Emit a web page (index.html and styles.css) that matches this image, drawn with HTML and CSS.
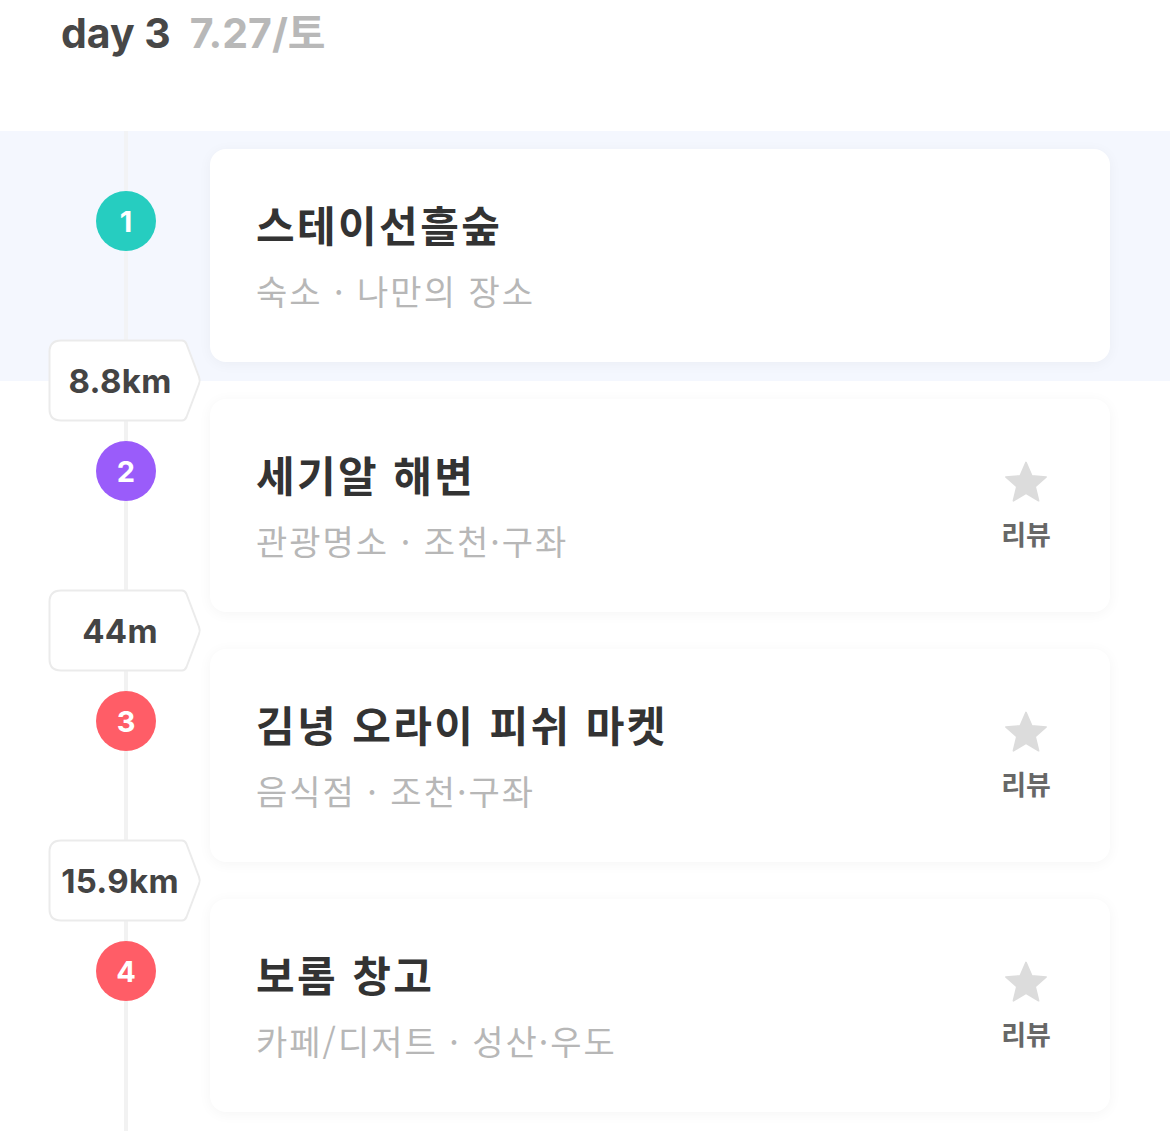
FILE: index.html
```html
<!DOCTYPE html>
<html lang="ko">
<head>
    <meta charset="UTF-8">
    <meta name="viewport" content="width=device-width, initial-scale=1.0">
    <title>day 3</title>
    <link rel="stylesheet" href="styles.css">
</head>
<body>
    <header class="day-header">
        <span class="day-title">day 3</span>
        <span class="day-date">7.27/토</span>
    </header>

    <div class="route">
        <div class="stop active">
            <div class="rail">
                <span class="pin pin-teal">1</span>
            </div>
            <div class="card">
                <div class="card-body">
                    <div class="place-name">스테이선흘숲</div>
                    <div class="place-meta">숙소 · 나만의 장소</div>
                </div>
            </div>
            <div class="distance">
                <svg class="distance-shape" width="154" height="83" viewBox="0 0 154 83">
                    <path d="M13 1.5 H134 Q137 1.5 138.5 5 L151 38 Q152.5 41.5 151 45 L138.5 78 Q137 81.5 134 81.5 H13 Q1.5 81.5 1.5 70 V13 Q1.5 1.5 13 1.5 Z" fill="#fff" stroke="#ebebeb" stroke-width="2"/>
                </svg>
                <span class="distance-text">8.8km</span>
            </div>
        </div>

        <div class="stop">
            <div class="rail">
                <span class="pin pin-purple">2</span>
            </div>
            <div class="card">
                <div class="card-body">
                    <div class="place-name">세기알 해변</div>
                    <div class="place-meta">관광명소 · 조천·구좌</div>
                </div>
                <div class="review">
                    <svg class="star" width="48" height="46" viewBox="0 0 24 23">
                        <path d="M12 1.2 L14.9 7.9 L22.1 8.5 L16.6 13.3 L18.3 20.4 L12 16.6 L5.7 20.4 L7.4 13.3 L1.9 8.5 L9.1 7.9 Z" fill="#dcdcdc" stroke="#dcdcdc" stroke-width="0.8" stroke-linejoin="round"/>
                    </svg>
                    <span class="review-label">리뷰</span>
                </div>
            </div>
            <div class="distance">
                <svg class="distance-shape" width="154" height="83" viewBox="0 0 154 83">
                    <path d="M13 1.5 H134 Q137 1.5 138.5 5 L151 38 Q152.5 41.5 151 45 L138.5 78 Q137 81.5 134 81.5 H13 Q1.5 81.5 1.5 70 V13 Q1.5 1.5 13 1.5 Z" fill="#fff" stroke="#ebebeb" stroke-width="2"/>
                </svg>
                <span class="distance-text">44m</span>
            </div>
        </div>

        <div class="stop">
            <div class="rail">
                <span class="pin pin-red">3</span>
            </div>
            <div class="card">
                <div class="card-body">
                    <div class="place-name">김녕 오라이 피쉬 마켓</div>
                    <div class="place-meta">음식점 · 조천·구좌</div>
                </div>
                <div class="review">
                    <svg class="star" width="48" height="46" viewBox="0 0 24 23">
                        <path d="M12 1.2 L14.9 7.9 L22.1 8.5 L16.6 13.3 L18.3 20.4 L12 16.6 L5.7 20.4 L7.4 13.3 L1.9 8.5 L9.1 7.9 Z" fill="#dcdcdc" stroke="#dcdcdc" stroke-width="0.8" stroke-linejoin="round"/>
                    </svg>
                    <span class="review-label">리뷰</span>
                </div>
            </div>
            <div class="distance">
                <svg class="distance-shape" width="154" height="83" viewBox="0 0 154 83">
                    <path d="M13 1.5 H134 Q137 1.5 138.5 5 L151 38 Q152.5 41.5 151 45 L138.5 78 Q137 81.5 134 81.5 H13 Q1.5 81.5 1.5 70 V13 Q1.5 1.5 13 1.5 Z" fill="#fff" stroke="#ebebeb" stroke-width="2"/>
                </svg>
                <span class="distance-text">15.9km</span>
            </div>
        </div>

        <div class="stop">
            <div class="rail">
                <span class="pin pin-red">4</span>
            </div>
            <div class="card">
                <div class="card-body">
                    <div class="place-name">보롬 창고</div>
                    <div class="place-meta">카페/디저트 · 성산·우도</div>
                </div>
                <div class="review">
                    <svg class="star" width="48" height="46" viewBox="0 0 24 23">
                        <path d="M12 1.2 L14.9 7.9 L22.1 8.5 L16.6 13.3 L18.3 20.4 L12 16.6 L5.7 20.4 L7.4 13.3 L1.9 8.5 L9.1 7.9 Z" fill="#dcdcdc" stroke="#dcdcdc" stroke-width="0.8" stroke-linejoin="round"/>
                    </svg>
                    <span class="review-label">리뷰</span>
                </div>
            </div>
        </div>
    </div>
</body>
</html>
```

FILE: styles.css
```css
body {
    margin: 0;
    padding: 0;
    background-color: #ffffff;
    font-family: Inter, "Noto Sans CJK KR", sans-serif;
    color: #333333;
}

.day-header {
    height: 131px;
    box-sizing: border-box;
    padding: 8px 0 0 61px;
    display: flex;
    align-items: flex-start;
    gap: 19px;
    font-weight: 700;
    font-size: 41px;
    line-height: 50px;
}

.day-title {
    color: #474747;
}

.day-date {
    color: #b8b8b8;
}

.route {
    display: flex;
    flex-direction: column;
}

.stop {
    position: relative;
    height: 250px;
    display: flex;
    background: linear-gradient(to right, transparent 124px, #f2f2f2 124px, #f2f2f2 128px, transparent 128px);
}

.stop.active {
    background: linear-gradient(to right, transparent 124px, #f2f3f5 124px, #f2f3f5 128px, transparent 128px), #f4f7fe;
}

.rail {
    width: 210px;
    flex-shrink: 0;
    padding: 60px 0 0 96px;
    box-sizing: border-box;
}

.pin {
    display: flex;
    align-items: center;
    justify-content: center;
    width: 60px;
    height: 60px;
    border-radius: 50%;
    color: #ffffff;
    font-family: Inter, sans-serif;
    font-weight: 700;
    font-size: 29px;
}

.pin-teal {
    background-color: #26cdc0;
}

.pin-purple {
    background-color: #9a5cfa;
}

.pin-red {
    background-color: #ff5d67;
}

.card {
    width: 900px;
    height: 213px;
    margin-top: 18px;
    box-sizing: border-box;
    padding: 0 38px 0 46px;
    display: flex;
    background-color: #ffffff;
    border-radius: 16px;
    box-shadow: 0 2px 14px rgba(0, 0, 0, 0.045);
}

.card-body {
    flex: 1;
    padding-top: 46px;
}

.place-name {
    font-family: "Noto Sans CJK KR", sans-serif;
    font-weight: 700;
    font-size: 42px;
    line-height: 58px;
    color: #333333;
    letter-spacing: 2.4px;
}

.place-meta {
    margin-top: 15px;
    font-family: "Noto Sans CJK KR", sans-serif;
    font-size: 34px;
    line-height: 46px;
    color: #b7b7b7;
    letter-spacing: 2px;
}

.review {
    width: 92px;
    display: flex;
    flex-direction: column;
    align-items: center;
    padding-top: 61px;
}

.review-label {
    margin-top: 10px;
    font-family: "Noto Sans CJK KR", sans-serif;
    font-weight: 700;
    font-size: 27px;
    line-height: 36px;
    color: #676767;
}

.distance {
    position: absolute;
    left: 48px;
    bottom: -41px;
    width: 154px;
    height: 83px;
    z-index: 2;
}

.distance-shape {
    position: absolute;
    left: 0;
    top: 0;
}

.distance-text {
    position: relative;
    display: flex;
    align-items: center;
    justify-content: center;
    width: 144px;
    height: 83px;
    font-family: Inter, sans-serif;
    font-weight: 700;
    font-size: 33px;
    color: #444444;
    letter-spacing: 0.3px;
}
```
